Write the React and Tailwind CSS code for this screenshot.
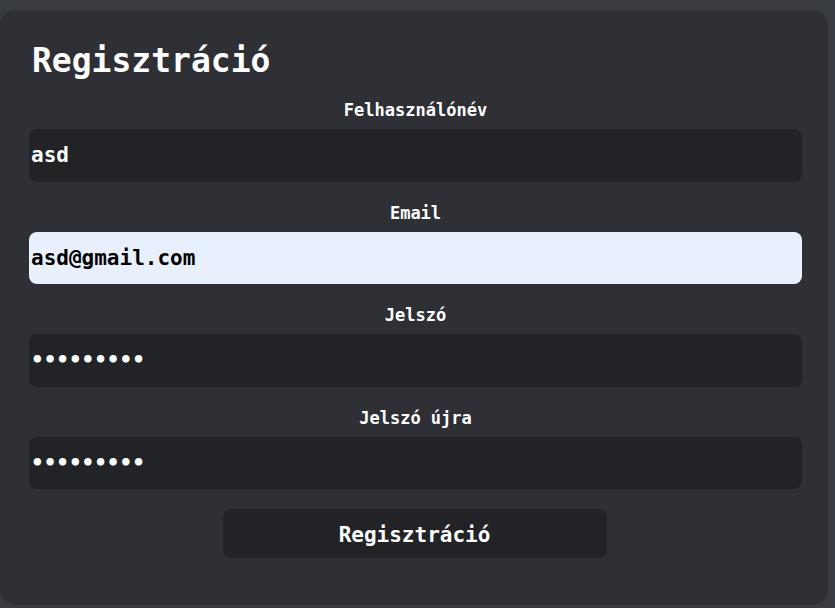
import React from "react";

const mono = { fontFamily: '"DejaVu Sans Mono", "Liberation Mono", monospace' };

function Field({ label, children }) {
  return (
    <div className="flex flex-col">
      <label className="h-[20px] text-center text-[17px] leading-[20px] font-bold text-white">{label}</label>
      <div className="mt-[9px]">{children}</div>
    </div>
  );
}

const inputCls =
  "w-full h-[52.6px] rounded-lg pl-[2px] text-[21px] font-bold outline-none border-0";

export default function App() {
  return (
    <div className="min-h-[608px] w-full bg-[#393b43] pt-[10px]" style={mono}>
      <div className="w-[828px] h-[595px] rounded-2xl bg-[#2f3036] pt-[31px] pl-[29px] pr-[26px]">
        <h1 className="h-[40px] pl-[3px] text-[33px] leading-[40px] font-bold text-white">Regisztráció</h1>
        <div className="mt-[19px] flex flex-col gap-[21px]">
          <Field label="Felhasználónév">
            <input className={inputCls + " bg-[#222327] text-white"} defaultValue="asd" style={mono} />
          </Field>
          <Field label="Email">
            <input className={inputCls + " bg-[#e8f0fe] text-black"} defaultValue="asd@gmail.com" style={mono} />
          </Field>
          <Field label="Jelszó">
            <input type="password" className={inputCls + " bg-[#222327] text-white"} defaultValue="123456789" style={mono} />
          </Field>
          <Field label="Jelszó újra">
            <input type="password" className={inputCls + " bg-[#222327] text-white"} defaultValue="123456789" style={mono} />
          </Field>
        </div>
        <div className="mt-[20px] flex justify-center pr-[2px]">
          <button className="w-[384px] h-[49px] rounded-lg bg-[#222327] pt-[4px] text-[21px] font-bold text-white" style={mono}>
            Regisztráció
          </button>
        </div>
      </div>
    </div>
  );
}
